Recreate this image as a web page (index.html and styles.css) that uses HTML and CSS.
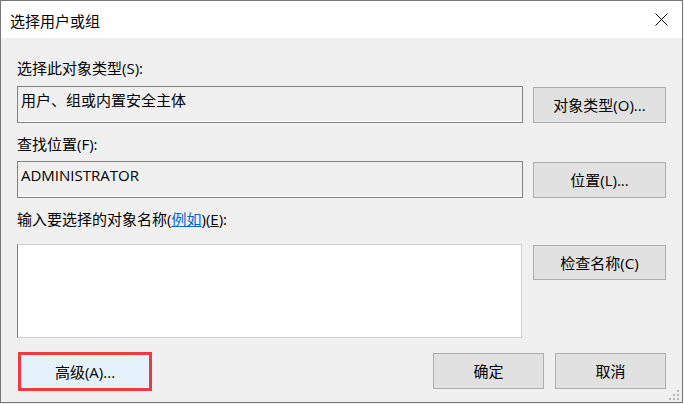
FILE: index.html
```html
<!DOCTYPE html>
<html lang="zh-CN">
<head>
<meta charset="utf-8">
<title>选择用户或组</title>
<link rel="stylesheet" href="styles.css">
</head>
<body>
<div class="window">
  <div class="titlebar">
    <span class="title">选择用户或组</span>
    <svg class="close" width="13" height="13" viewBox="0 0 13 13" aria-hidden="true">
      <path d="M0.5 0.5 L12.5 12.5 M12.5 0.5 L0.5 12.5" stroke="#000" stroke-width="1" fill="none"/>
    </svg>
  </div>
  <div class="content">
    <div class="label label-first">选择此对象类型(S):</div>
    <div class="row">
      <div class="field">用户、组或内置安全主体</div>
      <button class="btn">对象类型(O)...</button>
    </div>
    <div class="label label-second">查找位置(F):</div>
    <div class="row">
      <div class="field">ADMINISTRATOR</div>
      <button class="btn">位置(L)...</button>
    </div>
    <div class="label label-third">输入要选择的对象名称(<span class="link">例如</span>)(<span class="key">E</span>):</div>
    <div class="row row-top">
      <div class="textarea"></div>
      <button class="btn btn-check">检查名称(C)</button>
    </div>
    <div class="footer">
      <button class="btn btn-advanced">高级(A)...</button>
      <div class="footer-right">
        <button class="btn btn-small">确定</button>
        <button class="btn btn-small">取消</button>
      </div>
    </div>
  </div>
  <svg class="grip" width="10" height="10" viewBox="0 0 10 10" aria-hidden="true">
    <rect x="8" y="0" width="2" height="2" fill="#b9b9b9"/>
    <rect x="4" y="4" width="2" height="2" fill="#b9b9b9"/>
    <rect x="8" y="4" width="2" height="2" fill="#b9b9b9"/>
    <rect x="0" y="8" width="2" height="2" fill="#b9b9b9"/>
    <rect x="4" y="8" width="2" height="2" fill="#b9b9b9"/>
    <rect x="8" y="8" width="2" height="2" fill="#b9b9b9"/>
  </svg>
</div>
</body>
</html>
```
FILE: styles.css
```css
html, body {
  margin: 0;
  padding: 0;
  background: #f0f0f0;
}
body {
  font-family: "Open Sans", "Noto Sans", "Noto Sans CJK SC", sans-serif;
  font-size: 15px;
  line-height: 20px;
  color: #000;
}
.window {
  position: relative;
  box-sizing: border-box;
  width: 683px;
  height: 403px;
  border: 1px solid #777777;
  background: #f0f0f0;
  display: flex;
  flex-direction: column;
}
.titlebar {
  height: 37px;
  background: #ffffff;
  display: flex;
  justify-content: space-between;
  align-items: flex-start;
  flex: none;
}
.title {
  margin-left: 9px;
  margin-top: 10px;
}
.close {
  display: block;
  margin-top: 12px;
  margin-right: 14px;
}
.content {
  padding: 20px 16px 0 16px;
  display: flex;
  flex-direction: column;
}
.label-first { margin-bottom: 8px; }
.label-second { margin-top: 11px; margin-bottom: 7px; }
.label-third { margin-top: 11px; margin-bottom: 15px; }
.link {
  color: #0066cc;
  text-decoration: underline;
}
.key {
  text-decoration: underline;
}
.row {
  display: grid;
  grid-template-columns: 506px 133px;
  column-gap: 10px;
  align-items: center;
}
.row-top {
  align-items: start;
}
.field {
  box-sizing: border-box;
  height: 37px;
  border: 1px solid #838383;
  padding: 3px 3px 0 3px;
  background: #f0f0f0;
  box-shadow: inset 0 -1px 0 #ffffff;
  white-space: nowrap;
}
.textarea {
  box-sizing: border-box;
  width: 505px;
  height: 94px;
  background: #ffffff;
  border: 1px solid #cfcfcf;
  border-left-color: #7a7a7a;
}
.btn {
  box-sizing: border-box;
  height: 36px;
  margin: 0;
  padding: 0;
  font: inherit;
  color: #000;
  background: #e1e1e1;
  border: 1px solid #adadad;
  border-radius: 0;
  text-align: center;
}
.btn-check {
  margin-top: 1px;
  height: 35px;
}
.footer {
  margin-top: 14px;
  display: flex;
  justify-content: space-between;
  align-items: flex-start;
}
.btn-advanced {
  width: 134px;
  height: 39px;
  background: #e5f1fb;
  border: 3px solid #f03a3d;
  margin-left: 1px;
}
.footer-right {
  display: flex;
  gap: 11px;
  margin-top: 1px;
}
.btn-small {
  width: 111px;
  height: 36px;
}
.grip {
  position: absolute;
  right: 3px;
  bottom: 2px;
  display: block;
}
```
